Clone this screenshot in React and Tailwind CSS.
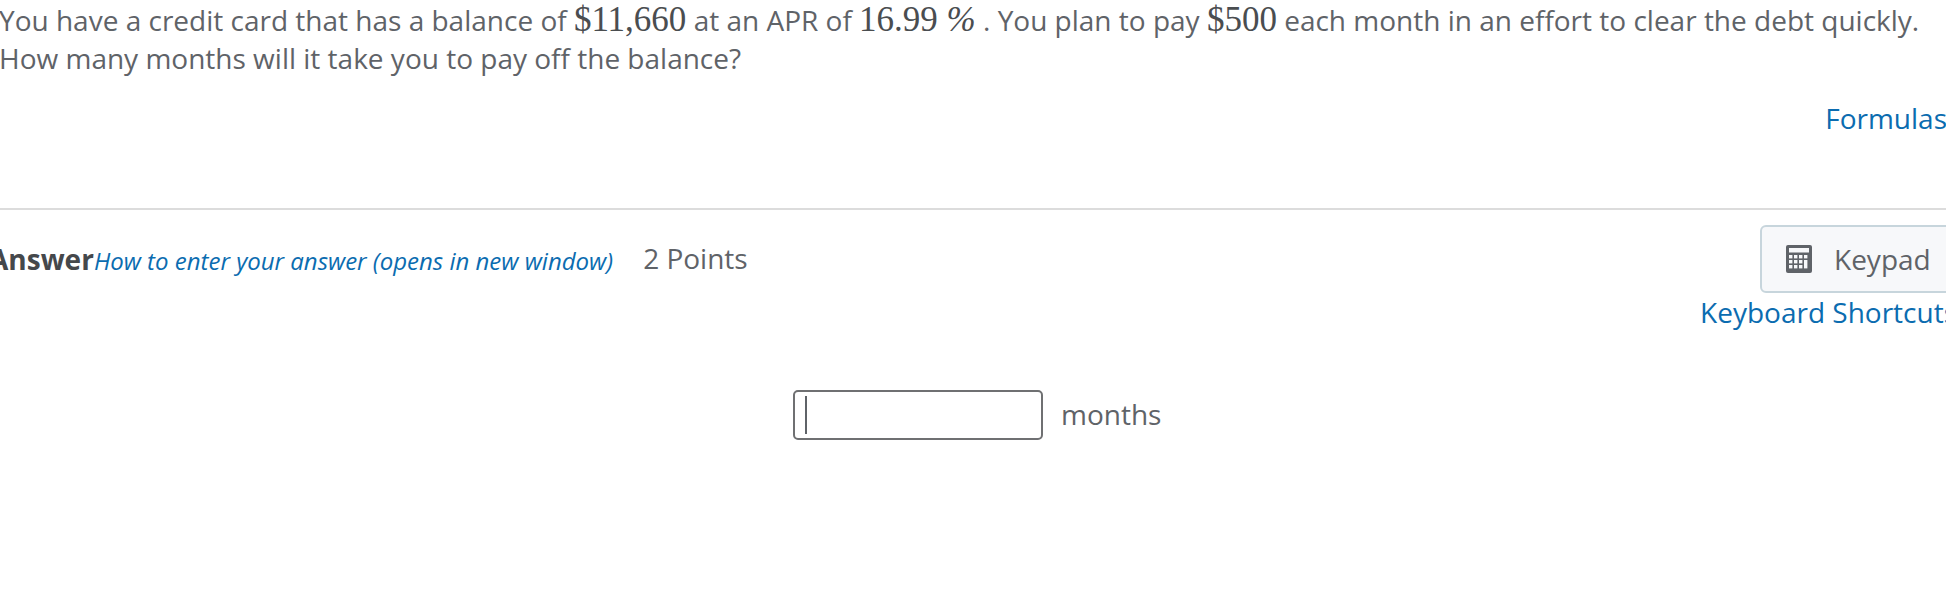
export default function App() {
  const M = ({ children }) => (
    <span className="font-['Liberation_Serif',serif] text-[35px] text-[#4a4d50]">{children}</span>
  );
  const keys = [];
  [10, 15, 20].forEach((y, r) =>
    [3, 8, 13, 18].forEach((x, c) => {
      if (c === 3 && r > 0) return;
      keys.push(<rect key={`${x}-${y}`} x={x} y={y} width="3.4" height="3.4" fill="#f7f8fa" />);
    })
  );
  return (
    <div className="w-[1946px] h-[592px] overflow-hidden bg-white font-['Open_Sans',sans-serif] text-[#5f6368] text-[28px] leading-[39px]">
      <div className="whitespace-nowrap ml-[-1px]">
        <div className="h-[39px]">
          You have a credit card that has a balance of <M>$11,660</M> at an APR of <M>16.99</M>
          <span className="font-['Liberation_Serif',serif] text-[35px] italic text-[#4a4d50]"> %</span> . You plan to pay <M>$500</M> each month in an effort to clear the debt quickly.
        </div>
        <div className="h-[39px]">How many months will it take you to pay off the balance?</div>
      </div>
      <div className="flex justify-end mt-[21px] h-[39px]">
        <a className="text-[#0b6cb0] whitespace-nowrap mr-[-1px]">Formulas</a>
      </div>
      <div className="mt-[70px] h-[2px] bg-[#dcdcdc]" />
      <div className="flex justify-between mt-[15px]">
        <div className="flex items-center whitespace-nowrap h-[67px] ml-[-11px]">
          <span className="font-bold text-[#45484b] mt-[2px]">Answer</span>
          <a className="italic text-[#0b6cb0] text-[24px] mt-[4px]">How to enter your answer (opens in new window)</a>
          <span className="ml-[30px]">2 Points</span>
        </div>
        <div className="flex flex-col items-end shrink-0">
          <div className="flex items-center w-[192px] h-[68px] mr-[-6px] pl-[24px] gap-[22px] border-2 border-[#c7d5dc] rounded-[6px] bg-[#f7f8fa]">
            <svg width="26" height="28" viewBox="0 0 26 28" className="shrink-0">
              <rect x="0" y="0" width="26" height="28" rx="2" fill="#5f6368" />
              <rect x="3" y="3" width="20" height="4.5" fill="#f7f8fa" />
              {keys}
              <rect x="18" y="15" width="3.4" height="8.4" fill="#f7f8fa" />
            </svg>
            <span>Keypad</span>
          </div>
          <a className="text-[#0b6cb0] whitespace-nowrap ml-[-60px] mr-[-11px]">Keyboard Shortcuts</a>
        </div>
      </div>
      <div className="flex items-center ml-[793px] mt-[58px]">
        <div className="w-[250px] h-[50px] border-2 border-[#6f7072] rounded-[5px] flex items-center pl-[10px]">
          <div className="w-[2px] h-[38px] bg-[#5f6368]" />
        </div>
        <span className="ml-[18px] mb-[2px]">months</span>
      </div>
    </div>
  );
}
